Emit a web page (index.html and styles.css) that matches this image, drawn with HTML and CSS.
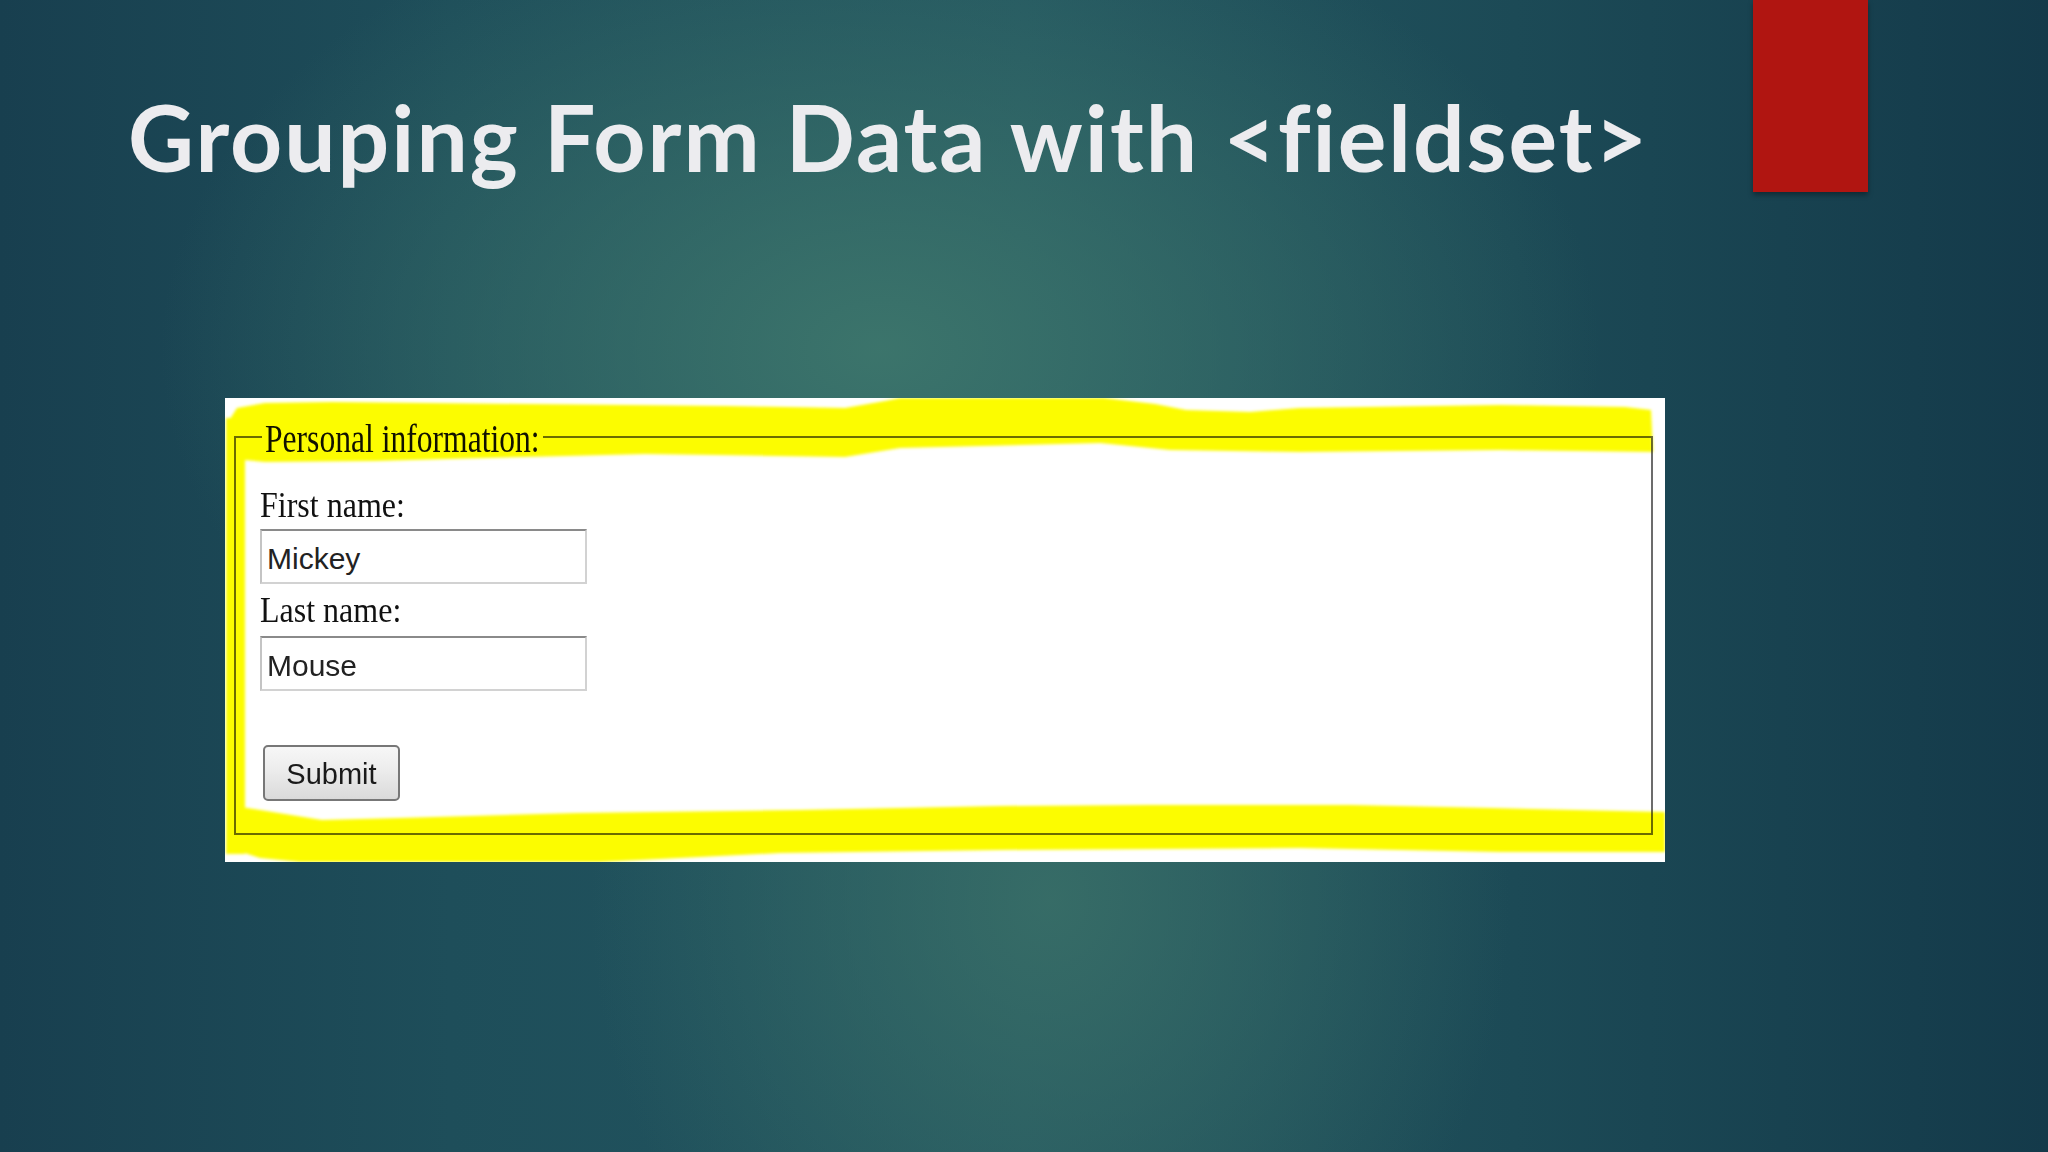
FILE: index.html
```html
<!DOCTYPE html>
<html lang="en">
<head>
<meta charset="utf-8">
<title>Grouping Form Data with &lt;fieldset&gt;</title>
<link rel="stylesheet" href="styles.css">
</head>
<body>
<div class="slide">
  <header class="slide-head">
    <h1 class="slide-title">Grouping Form Data with &lt;fieldset&gt;</h1>
    <div class="accent-bar"></div>
  </header>
  <div class="shot">
    <svg class="marker" viewBox="0 0 1440 464" width="1440" height="464" aria-hidden="true">
      <defs>
        <filter id="soft" x="-5%" y="-20%" width="110%" height="140%">
          <feGaussianBlur stdDeviation="1.4"/>
        </filter>
      </defs>
      <g fill="#fcfc00" filter="url(#soft)">
        <polygon points="3,24 12,10 40,5 107,4 300,6 500,8 620,10 660,3 675,0 879,0 930,6 961,12 1025,14 1075,10 1275,7 1400,9 1426,12 1428,54 1275,52 1075,54 945,52 875,45 675,50 620,59 420,56 300,59 150,63 40,64 19,62 19,70 2,70"/>
        <rect x="1" y="20" width="19" height="436"/>
        <polygon points="3,407 35,412 97,422 175,420 352,415 575,412 775,408 925,407 1125,407 1266,410 1440,414 1440,454 1275,454 1075,450 775,452 555,455 375,464 75,464 35,460 4,450"/>
      </g>
    </svg>
    <fieldset class="group">
      <legend class="group-legend"><span class="tall tall-lg">Personal information:</span></legend>
      <div class="fields">
        <label class="field-label" for="fn"><span class="tall">First name:</span></label>
        <input class="field-input" id="fn" type="text" value="Mickey">
        <label class="field-label second" for="ln"><span class="tall">Last name:</span></label>
        <input class="field-input" id="ln" type="text" value="Mouse">
        <button class="submit" type="button">Submit</button>
      </div>
    </fieldset>
  </div>
</div>
</body>
</html>
```
FILE: styles.css
```css
* { box-sizing: border-box; }

html, body {
  margin: 0;
  padding: 0;
}

body {
  width: 2048px;
  height: 1152px;
  overflow: hidden;
}

.slide {
  width: 2048px;
  height: 1152px;
  display: flex;
  flex-direction: column;
  background:
    radial-gradient(ellipse 720px 480px at 880px 350px, rgba(61,118,108,0.95), rgba(61,118,108,0) 100%),
    radial-gradient(ellipse 460px 520px at 1050px 900px, rgba(58,112,104,0.85), rgba(58,112,104,0) 100%),
    linear-gradient(90deg, #183f4f 0%, #1e4e5a 22%, #235660 50%, #1c4a56 74%, #143a4a 100%);
}

.slide-head {
  display: flex;
  align-items: flex-start;
  height: 192px;
}

.slide-title {
  margin: 82px 0 0 128px;
  font-family: "Lato", "DejaVu Sans", sans-serif;
  font-weight: 700;
  font-size: 91px;
  line-height: 1.2;
  color: #ececef;
  white-space: nowrap;
  letter-spacing: 2px;
}

.accent-bar {
  margin-left: auto;
  margin-right: 180px;
  width: 115px;
  height: 192px;
  background: #b01511;
  box-shadow: 0 3px 5px rgba(0, 0, 0, 0.35);
}

.shot {
  position: relative;
  margin: 206px 0 0 225px;
  width: 1440px;
  height: 464px;
  background: #ffffff;
}

.marker {
  position: absolute;
  left: 0;
  top: 0;
}

.group {
  position: relative;
  mix-blend-mode: multiply;
  margin: 13px 12px 0 9px;
  padding: 0 0 32px 24px;
  border: 2px solid #6c6c6c;
  min-width: 0;
}

.group-legend {
  margin-left: 2px;
  padding: 11px 3px 0 3px;
  font-family: "Liberation Serif", "Times New Roman", serif;
  font-size: 31.6px;
  line-height: 40px;
  color: #111;
}

.tall {
  display: inline-block;
  transform-origin: 0 29px;
  transform: scaleY(1.13);
}

.tall-lg {
  transform-origin: 0 30.6px;
  transform: scaleY(1.3);
}

.fields {
  display: flex;
  flex-direction: column;
  align-items: flex-start;
  padding-top: 26px;
}

.field-label {
  display: block;
  font-family: "Liberation Serif", "Times New Roman", serif;
  font-size: 32px;
  line-height: 36px;
  height: 36px;
  color: #111;
  margin-bottom: 5px;
}

.field-label.second {
  margin-top: 9px;
  margin-bottom: 7px;
}

.field-input {
  width: 327px;
  height: 55px;
  margin: 0;
  padding: 5px 5px 0 5px;
  border: 2px solid #d2d2d2;
  border-top-color: #8a8a8a;
  border-left-color: #c4c4c4;
  background: #fff;
  font-family: "Liberation Sans", Arial, sans-serif;
  font-size: 30px;
  color: #222;
  outline: none;
}

.submit {
  margin: 54px 0 0 3px;
  width: 137px;
  height: 56px;
  padding: 2px 0 0 0;
  border: 2px solid #777;
  border-radius: 5px;
  background: linear-gradient(#f7f7f7 0%, #ececec 45%, #dadada 100%);
  font-family: "Liberation Sans", Arial, sans-serif;
  font-size: 29px;
  color: #1a1a1a;
}
```
